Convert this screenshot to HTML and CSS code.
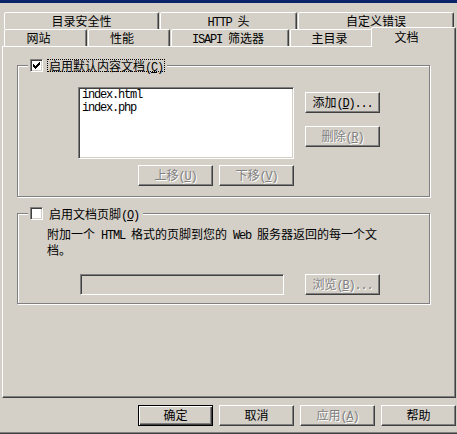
FILE: index.html
```html
<!DOCTYPE html>
<html lang="zh-CN">
<head>
<meta charset="utf-8">
<title>文档</title>
<link rel="stylesheet" href="styles.css">
</head>
<body>
<div class="window">
  <div class="titlebar"></div>
  <div class="tabrow back">
    <div class="tab w155">目录安全性</div>
    <div class="tab w137"><span class="mono">HTTP </span>头</div>
    <div class="tab w156">自定义错误</div>
  </div>
  <div class="tabrow front">
    <div class="tab w83 shift7">网站</div>
    <div class="tab w82 shift7">性能</div>
    <div class="tab w118 shift2"><span class="mono">ISAPI </span>筛选器</div>
    <div class="tab w83 shift2">主目录</div>
    <div class="tab selected">文档</div>
  </div>
  <div class="panel">
    <div class="group group-docs">
      <div class="legend">
        <span class="check"><svg width="7" height="7" viewBox="0 0 7 7"><path d="M0 2h1v3H0zM1 3h1v3H1zM2 4h1v3H2zM3 3h1v3H3zM4 2h1v3H4zM5 1h1v3H5zM6 0h1v3H6z" fill="#000"/></svg></span>
        <span class="legend-label focus">启用默认内容文档<span class="mono">(<u>C</u>)</span></span>
      </div>
      <div class="docs-grid">
        <div class="listbox">
          <div>index.html</div>
          <div>index.php</div>
        </div>
        <div class="side-buttons">
          <button class="btn">添加<span class="mono">(<u>D</u>)...</span></button>
          <button class="btn disabled">删除<span class="mono">(<u>R</u>)</span></button>
        </div>
        <div class="move-buttons">
          <button class="btn disabled">上移<span class="mono">(<u>U</u>)</span></button>
          <button class="btn disabled">下移<span class="mono">(<u>V</u>)</span></button>
        </div>
      </div>
    </div>
    <div class="group group-footer">
      <div class="legend">
        <span class="check"></span>
        <span class="legend-label">启用文档页脚<span class="mono">(<u>O</u>)</span></span>
      </div>
      <p class="footer-text">附加一个<span class="mono"> HTML </span>格式的页脚到您的<span class="mono"> Web </span>服务器返回的每一个文<span>档。</span></p>
      <div class="browse-row">
        <div class="edit"></div>
        <button class="btn disabled">浏览<span class="mono">(<u>B</u>)...</span></button>
      </div>
    </div>
  </div>
  <div class="dialog-buttons">
    <button class="btn default">确定</button>
    <button class="btn">取消</button>
    <button class="btn disabled">应用<span class="mono">(<u>A</u>)</span></button>
    <button class="btn">帮助</button>
  </div>
</div>
</body>
</html>
```

FILE: styles.css
```css
* {
  box-sizing: border-box;
}

html,
body {
  margin: 0;
  padding: 0;
}

body {
  width: 457px;
  height: 434px;
  overflow: hidden;
  background: #d4d0c8;
  font-family: "Noto Sans CJK SC", "Noto Sans", sans-serif;
  font-size: 12px;
  color: #000;
}

.mono {
  font-family: "Liberation Mono", monospace;
  font-size: 12px;
  letter-spacing: -1.2px;
}

.window {
  height: 434px;
  box-shadow: inset 0 -1px #404040, inset 0 -2px #808080;
}

.titlebar {
  height: 3px;
  background: #0a246a;
}

/* Tabs */
.tabrow {
  display: flex;
  align-items: flex-end;
  gap: 1px;
  height: 17px;
  padding-left: 4px;
}

.tabrow.back {
  margin-top: 9px;
}

.tab {
  height: 17px;
  border: 1px solid;
  border-bottom: 0;
  border-color: #fff #404040 transparent #fff;
  border-radius: 2px 2px 0 0;
  box-shadow: inset -1px 0 #808080;
  background: #d4d0c8;
  text-align: center;
  line-height: 16px;
  white-space: nowrap;
}

.w155 { width: 155px; }
.w137 { width: 137px; }
.w156 { width: 156px; }
.w83 { width: 83px; }
.w82 { width: 82px; }
.w118 { width: 118px; }

.tab.shift7 {
  padding-right: 14px;
}

.tab.shift2 {
  padding-right: 4px;
}

.tab.selected {
  position: relative;
  z-index: 1;
  width: 85px;
  height: 20px;
  margin-left: -3px;
  margin-bottom: -1px;
  padding-right: 14px;
  line-height: 17px;
}

/* Panel */
.panel {
  width: 454px;
  height: 352px;
  margin-left: 2px;
  padding: 18px 0 0 14px;
  border: 1px solid;
  border-color: #fff #404040 #404040 #fff;
  box-shadow: inset -1px -1px #808080;
}

.group {
  position: relative;
  width: 413px;
  border: 1px solid #808080;
  box-shadow: inset 1px 1px #fff, 1px 1px #fff;
}

.group-docs {
  height: 132px;
  padding: 21px 0 0 60px;
}

.group-footer {
  height: 91px;
  margin-top: 16px;
  padding: 13px 0 0 29px;
}

.legend {
  position: absolute;
  top: -7px;
  left: 10px;
  display: flex;
  align-items: center;
  gap: 4px;
  height: 13px;
  padding: 0 2px;
  background: #d4d0c8;
}

.check {
  display: block;
  width: 13px;
  height: 13px;
  padding: 2px;
  border: 1px solid;
  border-color: #808080 #fff #fff #808080;
  box-shadow: inset 1px 1px #404040, inset -1px -1px #d4d0c8;
  background: #fff;
}

.check svg {
  display: block;
  shape-rendering: crispEdges;
}

.legend-label {
  height: 13px;
  padding: 0 1px;
  border: 1px solid transparent;
  line-height: 11px;
  white-space: nowrap;
}

.legend-label.focus {
  border: 1px dotted #000;
}

.docs-grid {
  display: grid;
  grid-template-columns: 216px 75px;
  column-gap: 11px;
  row-gap: 6px;
}

.listbox {
  height: 72px;
  padding: 1px 0 0 3px;
  border: 1px solid;
  border-color: #808080 #fff #fff #808080;
  box-shadow: inset 1px 1px #404040, inset -1px -1px #d4d0c8;
  background: #fff;
  font-family: "Liberation Mono", monospace;
  font-size: 12px;
  letter-spacing: -1.2px;
  line-height: 13px;
}

.side-buttons {
  display: flex;
  flex-direction: column;
  gap: 13px;
  padding-top: 5px;
}

.move-buttons {
  display: flex;
  justify-content: flex-end;
  gap: 6px;
}

.footer-text {
  width: 340px;
  margin: 0;
  line-height: 13px;
}

.browse-row {
  display: flex;
  gap: 21px;
  margin-top: 18px;
  padding-left: 33px;
}

.edit {
  width: 204px;
  height: 21px;
  border: 1px solid;
  border-color: #808080 #fff #fff #808080;
  box-shadow: inset 1px 1px #404040, inset -1px -1px #d4d0c8;
  background: #d4d0c8;
}

/* Buttons */
.btn {
  appearance: none;
  width: 75px;
  height: 21px;
  margin: 0;
  padding: 0 0 1px;
  border: 1px solid;
  border-color: #fff #404040 #404040 #fff;
  box-shadow: inset -1px -1px #808080;
  background: #d4d0c8;
  color: #000;
  font: inherit;
  line-height: 18px;
  text-align: center;
  white-space: nowrap;
}

.btn.default {
  border-color: #000;
  box-shadow: inset 1px 1px #fff, inset -1px -1px #404040, inset -2px -2px #808080;
}

.btn.disabled {
  color: #808080;
  text-shadow: 1px 1px 0 #fff;
}

.dialog-buttons {
  display: flex;
  justify-content: flex-end;
  gap: 6px;
  margin-top: 7px;
  padding-right: 1px;
}
```
